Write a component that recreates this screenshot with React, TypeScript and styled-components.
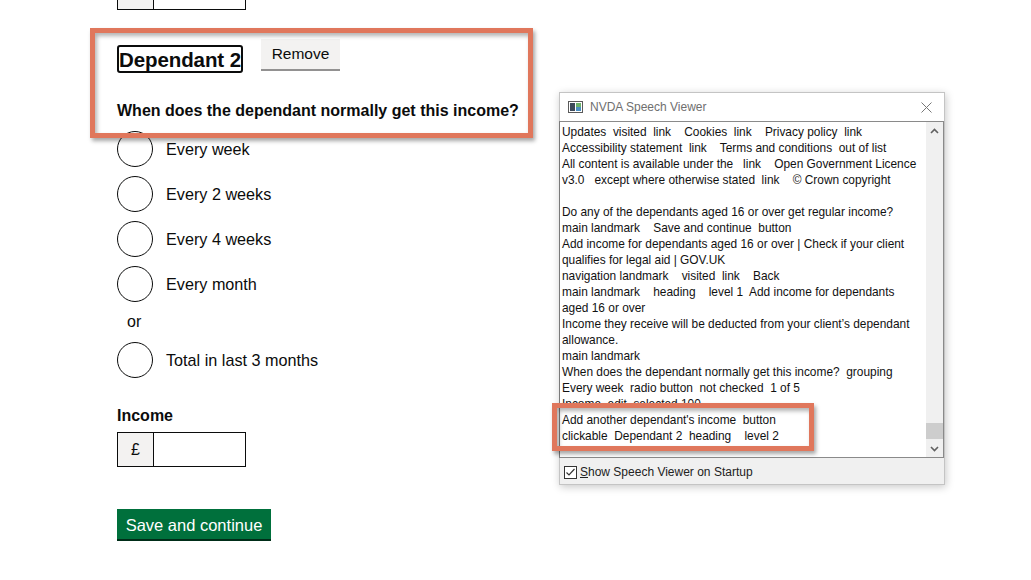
import React from "react";
import styled, { createGlobalStyle } from "styled-components";

const Global = createGlobalStyle`
  html, body { margin: 0; padding: 0; background: #ffffff; }
  body { width: 1031px; height: 580px; overflow: hidden; position: relative; }
  * { box-sizing: border-box; }
`;

const Page = styled.div`
  display: flex;
  flex-direction: column;
  align-items: flex-start;
  padding-left: 117px;
  font-family: "Liberation Sans", Arial, sans-serif;
  color: #0b0c0c;
`;

const PrefixInput = styled.div<{ $top: number; $mt: number }>`
  display: flex;
  height: ${(p) => p.$top}px;
  margin-top: ${(p) => p.$mt}px;
`;

const Prefix = styled.div`
  width: 36px;
  height: 100%;
  background: #f3f2f1;
  border: 1.6px solid #0b0c0c;
  border-right: none;
  display: flex;
  align-items: center;
  justify-content: center;
  font-size: 16px;
  font-family: "Liberation Sans", Arial, sans-serif;
`;

const Field = styled.div`
  width: 93px;
  height: 100%;
  border: 1.6px solid #0b0c0c;
  background: #fff;
`;

const HeadingRow = styled.div`
  display: flex;
  align-items: flex-start;
  margin-top: 29px;
`;

const Heading = styled.h2`
  margin: 6px 0 0 0;
  height: 28px;
  width: 126px;
  border: 2px solid #0b0c0c;
  border-radius: 3px;
  font-size: 20.5px;
  font-weight: 700;
  line-height: 24px;
  display: flex;
  align-items: center;
  justify-content: center;
  padding-top: 2px;
  letter-spacing: -0.1px;
`;

const RemoveButton = styled.button`
  margin-left: 18px;
  width: 79px;
  height: 30px;
  border: none;
  background: #f3f2f1;
  box-shadow: 0 2px 0 #929191;
  font-family: "Liberation Sans", Arial, sans-serif;
  font-size: 15.5px;
  color: #0b0c0c;
  padding: 0;
`;

const Legend = styled.div`
  margin-top: 28px;
  font-size: 16px;
  font-weight: 700;
  line-height: 20px;
`;

const RadioList = styled.div`
  display: flex;
  flex-direction: column;
  gap: 9px;
  margin-top: 10px;
`;

const RadioItem = styled.label`
  display: flex;
  align-items: center;
  gap: 13px;
  height: 36px;
  font-size: 16.2px;
`;

const Circle = styled.span`
  width: 36px;
  height: 36px;
  border: 1.6px solid #0b0c0c;
  border-radius: 50%;
  background: #fff;
  flex: none;
`;

const OrText = styled.div`
  margin: 1px 0 1px 10px;
  font-size: 16px;
  line-height: 20px;
`;

const Label = styled.div`
  margin-top: 28px;
  font-size: 16px;
  font-weight: 700;
  line-height: 20px;
`;

const SaveButton = styled.button`
  margin-top: 42px;
  width: 154px;
  height: 30px;
  border: none;
  background: #00703c;
  box-shadow: 0 2px 0 #002d18;
  color: #fff;
  font-family: "Liberation Sans", Arial, sans-serif;
  font-size: 16.5px;
  padding: 3px 0 0 0;
`;

const Highlight = styled.div<{ $l: number; $t: number; $w: number; $h: number }>`
  position: absolute;
  left: ${(p) => p.$l}px;
  top: ${(p) => p.$t}px;
  width: ${(p) => p.$w}px;
  height: ${(p) => p.$h}px;
  border: 5px solid #e0775c;
  box-shadow: 2px 3px 4px rgba(0, 0, 0, 0.35), inset 2px 3px 4px rgba(0, 0, 0, 0.3);
  pointer-events: none;
  z-index: 5;
`;

const Win = styled.div`
  position: absolute;
  left: 559px;
  top: 92px;
  width: 386px;
  height: 393px;
  display: flex;
  flex-direction: column;
  background: #f0f0f0;
  border: 1px solid #c4c4c4;
  box-shadow: 1px 2px 8px rgba(0, 0, 0, 0.22);
  font-family: "Liberation Sans", Arial, sans-serif;
`;

const TitleBar = styled.div`
  height: 28px;
  background: #fff;
  display: flex;
  align-items: center;
  padding: 0 0 0 8px;
  gap: 7px;
  color: #6f6f6f;
  font-size: 12px;
`;

const TitleText = styled.span`
  flex: 1;
`;

const CloseBox = styled.div`
  width: 36px;
  height: 28px;
  display: flex;
  align-items: center;
  justify-content: center;
`;

const TextArea = styled.div`
  height: 337px;
  background: #fff;
  border: 1px solid #8a8a8a;
  border-left-color: #7a7a7a;
  margin-left: -1px;
  display: flex;
`;

const TextBody = styled.div`
  flex: 1;
  padding: 2px 0 0 2px;
  overflow: hidden;
  font-size: 11.9px;
  line-height: 16px;
  color: #111;
`;

const TextLine = styled.div`
  white-space: pre;
  height: 16px;
`;

const ScrollBar = styled.div`
  width: 17px;
  background: #f0f0f0;
  display: flex;
  flex-direction: column;
  align-items: center;
`;

const ScrollArrow = styled.div`
  height: 17px;
  width: 100%;
  display: flex;
  align-items: center;
  justify-content: center;
`;

const Track = styled.div`
  flex: 1;
  width: 100%;
  display: flex;
  flex-direction: column;
  justify-content: flex-end;
`;

const Thumb = styled.div`
  height: 16px;
  width: 100%;
  background: #cdcdcd;
  margin-bottom: 1px;
`;

const BottomBar = styled.div`
  flex: 1;
  display: flex;
  align-items: center;
  padding: 2px 0 0 4px;
  gap: 3px;
  font-size: 12px;
  color: #222;
`;

const CheckBox = styled.div`
  width: 13px;
  height: 13px;
  border: 1px solid #333;
  background: #fff;
  display: flex;
  align-items: center;
  justify-content: center;
`;

const U = styled.span`
  text-decoration: underline;
`;

const lines = [
  "Updates  visited  link    Cookies  link    Privacy policy  link",
  "Accessibility statement  link    Terms and conditions  out of list",
  "All content is available under the   link    Open Government Licence",
  "v3.0   except where otherwise stated  link    \u00a9 Crown copyright",
  "",
  "Do any of the dependants aged 16 or over get regular income?",
  "main landmark    Save and continue  button",
  "Add income for dependants aged 16 or over | Check if your client",
  "qualifies for legal aid | GOV.UK",
  "navigation landmark    visited  link    Back",
  "main landmark    heading    level 1  Add income for dependants",
  "aged 16 or over",
  "Income they receive will be deducted from your client\u2019s dependant",
  "allowance.",
  "main landmark",
  "When does the dependant normally get this income?  grouping",
  "Every week  radio button  not checked  1 of 5",
  "Income  edit  selected 100",
  "Add another dependant's income  button",
  "clickable  Dependant 2  heading    level 2",
];

const options = ["Every week", "Every 2 weeks", "Every 4 weeks", "Every month"];

export default function App() {
  return (
    <>
      <Global />
      <Page>
        <PrefixInput $top={36} $mt={-26}>
          <Prefix />
          <Field />
        </PrefixInput>
        <HeadingRow>
          <Heading>Dependant 2</Heading>
          <RemoveButton>Remove</RemoveButton>
        </HeadingRow>
        <Legend>When does the dependant normally get this income?</Legend>
        <RadioList>
          {options.map((o) => (
            <RadioItem key={o}>
              <Circle />
              {o}
            </RadioItem>
          ))}
          <OrText>or</OrText>
          <RadioItem>
            <Circle />
            Total in last 3 months
          </RadioItem>
        </RadioList>
        <Label>Income</Label>
        <PrefixInput $top={35} $mt={6}>
          <Prefix>£</Prefix>
          <Field />
        </PrefixInput>
        <SaveButton>Save and continue</SaveButton>
      </Page>

      <Win>
        <TitleBar>
          <svg width="15" height="12" viewBox="0 0 15 12">
            <rect x="0.5" y="0.5" width="14" height="11" fill="#fff" stroke="#5a5a5a" />
            <rect x="2" y="2" width="5" height="8" fill="#3d4a5a" />
            <rect x="8" y="2" width="5" height="4" fill="#6bb36b" />
            <rect x="8" y="6" width="5" height="4" fill="#4a8fc0" />
          </svg>
          <TitleText>NVDA Speech Viewer</TitleText>
          <CloseBox>
            <svg width="11" height="11" viewBox="0 0 11 11">
              <path d="M0.5 0.5 L10.5 10.5 M10.5 0.5 L0.5 10.5" stroke="#777" strokeWidth="1" />
            </svg>
          </CloseBox>
        </TitleBar>
        <TextArea>
          <TextBody>
            {lines.map((l, i) => (
              <TextLine key={i}>{l}</TextLine>
            ))}
          </TextBody>
          <ScrollBar>
            <ScrollArrow>
              <svg width="9" height="6" viewBox="0 0 9 6">
                <path d="M1 5 L4.5 1.5 L8 5" fill="none" stroke="#606060" strokeWidth="1.6" />
              </svg>
            </ScrollArrow>
            <Track>
              <Thumb />
            </Track>
            <ScrollArrow>
              <svg width="9" height="6" viewBox="0 0 9 6">
                <path d="M1 1 L4.5 4.5 L8 1" fill="none" stroke="#606060" strokeWidth="1.6" />
              </svg>
            </ScrollArrow>
          </ScrollBar>
        </TextArea>
        <BottomBar>
          <CheckBox>
            <svg width="11" height="11" viewBox="0 0 11 11">
              <path d="M1.5 5.5 L4 8 L9.5 2" fill="none" stroke="#333" strokeWidth="1.2" />
            </svg>
          </CheckBox>
          <span>
            <U>S</U>how Speech Viewer on Startup
          </span>
        </BottomBar>
      </Win>

      <Highlight $l={90} $t={28} $w={443} $h={110} />
      <Highlight $l={552} $t={403} $w={262} $h={48} />
    </>
  );
}
